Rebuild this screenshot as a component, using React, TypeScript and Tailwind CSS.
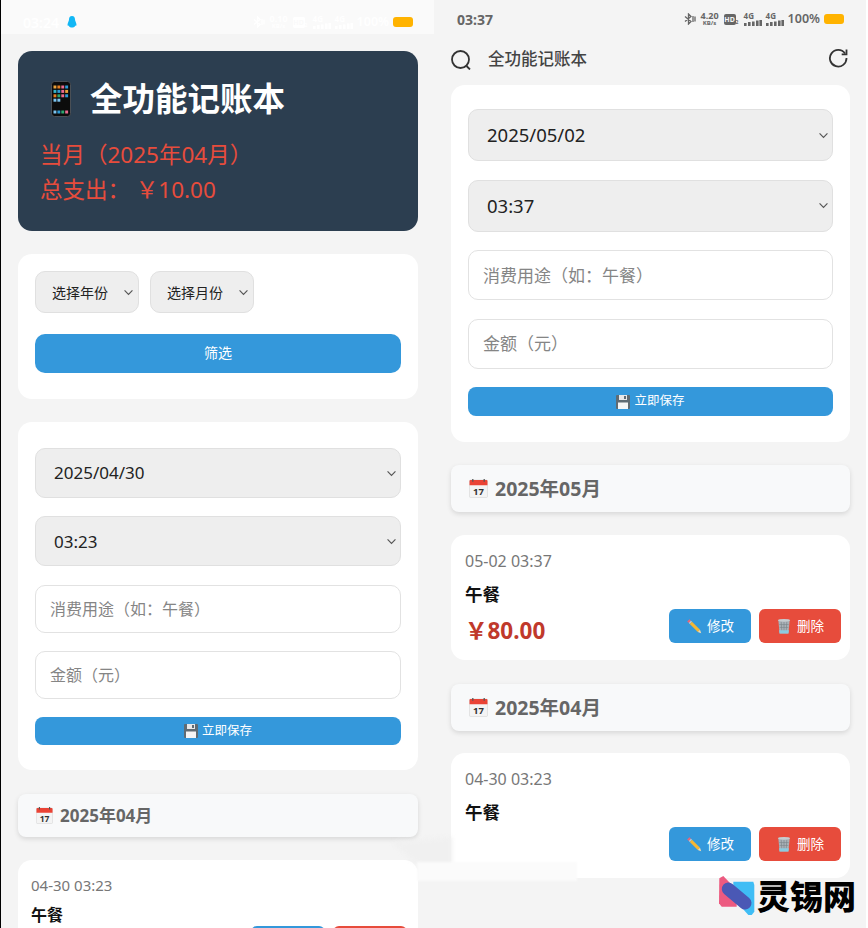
const FONT = "font-['Noto_Sans','Noto_Sans_CJK_SC',sans-serif]"

function Chevron({ className }: { className: string }) {
  return (
    <svg viewBox="0 0 12 8" className={className} fill="none" stroke="#555" strokeWidth="1.3">
      <path d="M1.5 1.5 6 6.2l4.5-4.7" />
    </svg>
  )
}

function PhoneEmoji() {
  const colors = ['#e9a23b', '#e67e22', '#ec6a8f', '#2e9bd6', '#34b3c9', '#2e9bd6', '#ec6a8f', '#e9a23b', '#e67e22', '#2ea66f', '#ec6a8f', '#2e9bd6', '#7cc4f0', '#7cc4f0']
  return (
    <svg viewBox="0 0 22 36" className="h-[36px] w-[22px] shrink-0">
      <rect x="1.5" y="0.5" width="19" height="35" rx="3" fill="#0c0c0c" stroke="#4a4f55" />
      {colors.map((c, i) => (
        <rect key={i} x={3.5 + (i % 4) * 3.9} y={4.5 + Math.floor(i / 4) * 4.4} width="2.9" height="3" fill={c} />
      ))}
      {['#7cc4f0', '#2e9bd6', '#2ea66f', '#ec6a8f'].map((c, i) => (
        <rect key={c} x={3.5 + i * 3.9} y="29.5" width="2.9" height="3" fill={c} />
      ))}
    </svg>
  )
}

function CalendarEmoji({ className }: { className: string }) {
  return (
    <svg viewBox="0 0 18 18" className={className}>
      <rect x="0.5" y="1" width="17" height="16.5" rx="1" fill="#f4f4f4" stroke="#cfcfcf" strokeWidth="0.5" />
      <path d="M0.5 2a1 1 0 0 1 1-1h15a1 1 0 0 1 1 1v4h-17z" fill="#ea4335" />
      <rect x="3" y="0" width="1.2" height="2.6" fill="#555" />
      <rect x="13.8" y="0" width="1.2" height="2.6" fill="#555" />
      <text x="9" y="15.4" textAnchor="middle" fontSize="9" fontWeight="700" fill="#333" fontFamily="Noto Sans">17</text>
    </svg>
  )
}

function FloppyEmoji() {
  return (
    <svg viewBox="0 0 14 14" className="h-[14px] w-[14px] shrink-0">
      <path d="M0 1a1 1 0 0 1 1-1h12a1 1 0 0 1 1 1v12a1 1 0 0 1-1 1H1a1 1 0 0 1-1-1z" fill="#5f6b73" />
      <rect x="3" y="0" width="8" height="5" fill="#e8e8e8" />
      <rect x="8" y="1" width="2" height="3" fill="#5f6b73" />
      <rect x="2" y="7.5" width="10" height="6.5" fill="#f5f5f5" />
    </svg>
  )
}

function PencilEmoji({ className }: { className: string }) {
  return (
    <svg viewBox="0 0 16 16" className={className}>
      <path d="M3.4 1.2 1.2 3.4l1.6 1.6L5 2.8z" fill="#e8667a" />
      <path d="M5 2.8 2.8 5l1 1L6 3.8z" fill="#c7ccd1" />
      <path d="M6 3.8 3.8 6l8 8 2.2-2.2z" fill="#f7b733" />
      <path d="m14 11.8-2.2 2.2 3.4 1.2z" fill="#f5dcb0" />
    </svg>
  )
}

function TrashEmoji({ className }: { className: string }) {
  return (
    <svg viewBox="0 0 16 17" className={className}>
      <path d="M2 2.5h12l-1.3 14H3.3z" fill="#aab2b8" />
      <path d="M2.8 13h10.4l-.5 3.5H3.3z" fill="#8ccbe0" />
      <path d="M5 4l.6 9M8 4v9M11 4l-.6 9M3 7h10M3.3 10h9.4" stroke="#7c858b" strokeWidth="0.7" />
      <ellipse cx="8" cy="2.5" rx="6.5" ry="1.5" fill="#c6ccd0" />
    </svg>
  )
}

function Signal() {
  return (
    <span className="flex w-[18px] flex-col items-start">
      <span className="text-[8px] font-bold leading-[8px]">4G</span>
      <svg viewBox="0 0 18 6" className="h-[6px] w-[18px]" fill="currentColor">
        <rect x="0" y="3" width="2.6" height="3" />
        <rect x="4" y="2" width="2.6" height="4" />
        <rect x="8" y="1.5" width="2.6" height="4.5" />
        <rect x="12" y="0.5" width="2.6" height="5.5" />
        <rect x="15.4" y="0" width="2.6" height="6" />
      </svg>
    </span>
  )
}

function StatusIcons({ speed, hdText }: { speed: string; hdText: string }) {
  return (
    <div className="flex items-center gap-[4px]">
      <svg viewBox="0 0 12 12" className="h-[12px] w-[12px]" fill="none" stroke="currentColor" strokeWidth="1.3">
        <path d="M1 3.5 7 8.5 4.5 11V1L7 3.5 1 8.5M9 3v6M11 3.5v5" />
      </svg>
      <span className="flex w-[20px] flex-col items-center font-bold">
        <span className="text-[9px] leading-[9px]">{speed}</span>
        <span className="text-[6px] leading-[7px]">KB/s</span>
      </span>
      <span className="flex w-[16px] items-end">
        <span className={`flex h-[11px] w-[12px] items-center justify-center rounded-[2px] bg-current`}>
          <span className={`text-[7px] font-bold leading-none ${hdText}`}>HD</span>
        </span>
        <span className="text-[5px] font-bold leading-[6px]">2</span>
      </span>
      <Signal />
      <Signal />
      <span className="text-[12.5px] font-semibold leading-none">100%</span>
      <span className="h-[10px] w-[20px] rounded-[3px] bg-[#ffb300]" />
    </div>
  )
}

function FakeSelect({ label, dense }: { label: string; dense: boolean }) {
  return (
    <div
      className={`flex items-center justify-between rounded-[10px] border border-[#e0e0e0] bg-[#eeeeee] pl-[18px] pr-[3px] text-[#222] ${
        dense ? 'h-[50px] text-[17px]' : 'h-[52px] text-[18.5px]'
      }`}
    >
      <span>{label}</span>
      <Chevron className="h-[7px] w-[11px]" />
    </div>
  )
}

function Field({ placeholder, dense }: { placeholder: string; dense: boolean }) {
  return (
    <input
      readOnly
      placeholder={placeholder}
      className={`w-full rounded-[10px] border border-[#e2e2e2] bg-white px-[14px] placeholder:text-[#858585] ${
        dense ? 'h-[48px] text-[16px]' : 'h-[50px] text-[17px]'
      }`}
    />
  )
}

function ExpenseForm({ date, time, dense }: { date: string; time: string; dense: boolean }) {
  return (
    <section className={`flex flex-col rounded-[14px] bg-white px-[17px] ${dense ? 'mb-px gap-[18.25px] pb-[25px] pt-[26px]' : 'gap-[18.5px] pb-[26px] pt-[24px]'}`}>
      <FakeSelect label={date} dense={dense} />
      <FakeSelect label={time} dense={dense} />
      <Field placeholder="消费用途（如：午餐）" dense={dense} />
      <Field placeholder="金额（元）" dense={dense} />
      <button className={`flex items-center justify-center gap-[4px] rounded-[8px] bg-[#3498db] text-[12.5px] text-white ${dense ? 'h-[28px]' : 'h-[29px]'}`}>
        <FloppyEmoji />
        立即保存
      </button>
    </section>
  )
}

function MonthHeader({ month, dense }: { month: string; dense: boolean }) {
  return (
    <div
      className={`flex items-center rounded-[8px] bg-[#f8f9fa] font-bold text-[#666] shadow-[0_2px_5px_rgba(0,0,0,0.12)] ${
        dense ? 'h-[43px] gap-[7px] pl-[18px] text-[17px]' : 'h-[47px] gap-[7px] pl-[18px] text-[19.5px]'
      }`}
    >
      <CalendarEmoji className={dense ? 'h-[17px] w-[17px]' : 'h-[19px] w-[19px]'} />
      {month}
    </div>
  )
}

function RecordCard({ time, title, amount, dense }: { time: string; title: string; amount?: string; dense: boolean }) {
  const btn = `flex items-center justify-center gap-[5px] rounded-[6px] text-white ${dense ? 'h-[34px] w-[74px] text-[13px]' : 'h-[34px] w-[82px] text-[13.5px]'}`
  return (
    <article className={`rounded-[14px] bg-white ${dense ? 'pl-[13px] pr-[11px]' : 'pl-[14px] pr-[9px]'} pb-[17px] pt-[15px]`}>
      <p className={`text-[#777] ${dense ? 'text-[15px] leading-[20px]' : 'text-[16px] leading-[22px]'}`}>{time}</p>
      <p className={`font-semibold text-[#111] ${dense ? 'mt-[9px] text-[16px] leading-[22px]' : 'mt-[11px] text-[17.5px] leading-[22px]'}`}>{title}</p>
      <div className={`flex items-center justify-between ${dense ? 'mt-0' : 'mt-[4px]'}`}>
        <span className="h-[34px] pt-[5px] text-[22.5px] font-bold leading-[34px] text-[#c0392b]">{amount}</span>
        <div className="flex gap-[8px]">
          <button className={`${btn} bg-[#3498db]`}>
            <PencilEmoji className="h-[16px] w-[16px]" />
            修改
          </button>
          <button className={`${btn} bg-[#e74c3c]`}>
            <TrashEmoji className="h-[16px] w-[16px]" />
            删除
          </button>
        </div>
      </div>
    </article>
  )
}

function LeftPhone() {
  return (
    <div className="flex h-[928px] w-[434px] shrink-0 flex-col overflow-hidden border-l border-black bg-[#f4f4f4]">
      <div className="flex h-[34px] shrink-0 items-center justify-between bg-[#fafafa] pl-[22px] pr-[21px] pt-[10px] text-white">
        <div className="flex items-center gap-[8px]">
          <span className="text-[14px] font-semibold">03:24</span>
          <svg viewBox="0 0 10 12" className="h-[12px] w-[10px]" fill="#12b7f5">
            <path d="M5 0C2.8 0 2 1.8 2 3.5 2 5 .5 7 .5 9c0 .8.6 1 1.2.5C2 11 3.5 11.500 5 11.500S8 11 8.300 9.500c.6.500 1.200.3 1.200-.5 0-2-1.500-4-1.500-5.500C8 1.800 7.200 0 5 0z" />
          </svg>
        </div>
        <StatusIcons speed="0.10" hdText="text-[#fafafa]" />
      </div>
      <div className="flex flex-col gap-[23px] pl-[17px] pr-[16px] pt-[17px]">
        <header className="flex h-[180px] flex-col rounded-[14px] bg-[#2c3e50] pl-[23px] pt-[28px]">
          <div className="flex items-center gap-[18px] pl-[9px]">
            <PhoneEmoji />
            <h1 className="text-[32.5px] font-bold leading-[40px] text-white">全功能记账本</h1>
          </div>
          <p className="-ml-px mt-[18px] text-[22.5px] leading-[35px] text-[#e74c3c]">当月（2025年04月）</p>
          <p className="-ml-px text-[22.5px] leading-[35px] text-[#e74c3c]">总支出： ￥10.00</p>
        </header>
        <section className="flex h-[145px] flex-col rounded-[14px] bg-white px-[17px] pt-[17px]">
          <div className="flex gap-[11px]">
            {['选择年份', '选择月份'].map((label) => (
              <div key={label} className="flex h-[42px] w-[104px] items-center justify-between rounded-[10px] border border-[#e0e0e0] bg-[#eeeeee] pl-[16px] pr-[4px] text-[14px] text-[#222]">
                <span>{label}</span>
                <Chevron className="h-[7px] w-[11px]" />
              </div>
            ))}
          </div>
          <button className="mt-[21px] h-[39px] rounded-[10px] bg-[#3498db] pb-[2px] text-[14px] text-white">筛选</button>
        </section>
        <ExpenseForm date="2025/04/30" time="03:23" dense />
        <MonthHeader month="2025年04月" dense />
        <RecordCard time="04-30 03:23" title="午餐" amount="￥10.00" dense />
      </div>
    </div>
  )
}

function RightPhone() {
  return (
    <div className="flex h-[928px] w-[434px] shrink-0 flex-col overflow-hidden border-r-2 border-white bg-[#f4f4f4]">
      <div className="flex h-[38px] shrink-0 items-center justify-between pl-[23px] pr-[22px] text-[#666]">
        <span className="text-[14px] font-bold">03:37</span>
        <StatusIcons speed="4.20" hdText="text-[#f4f4f4]" />
      </div>
      <nav className="flex h-[47px] shrink-0 items-start justify-between pl-[17px] pr-[18px] pt-[10px] text-[#333]">
        <div className="flex items-center gap-[17px]">
          <svg viewBox="0 0 20 20" className="h-[20px] w-[20px]" fill="none" stroke="currentColor" strokeWidth="1.8">
            <circle cx="9.5" cy="9.5" r="8.5" />
            <path d="m15.5 16 3.5 3.5" />
          </svg>
          <span className="-translate-y-px text-[16.5px] font-medium text-[#444]">全功能记账本</span>
        </div>
        <svg viewBox="0 0 20 20" className="h-[20px] w-[20px]" fill="none" stroke="currentColor" strokeWidth="1.8">
          <path d="M17 5.5A8.3 8.3 0 1 0 18.5 10" />
          <path d="M18.5 1.5v4.8h-4.8" />
        </svg>
      </nav>
      <div className="flex flex-col gap-[23px] pl-[17px] pr-[16px]">
        <ExpenseForm date="2025/05/02" time="03:37" dense={false} />
        <MonthHeader month="2025年05月" dense={false} />
        <div className="pb-px">
          <RecordCard time="05-02 03:37" title="午餐" amount="￥80.00" dense={false} />
        </div>
        <div className="-mb-px">
          <MonthHeader month="2025年04月" dense={false} />
        </div>
        <RecordCard time="04-30 03:23" title="午餐" dense={false} />
      </div>
    </div>
  )
}

export default function App() {
  return (
    <div className={`relative flex h-[928px] w-[868px] overflow-hidden bg-[#f4f4f4] ${FONT}`}>
      <LeftPhone />
      <RightPhone />
      {/* smeared patch where the two screenshots were retouched */}
      <svg viewBox="0 0 60 28" className="absolute left-[392px] top-[837px] h-[28px] w-[60px] blur-[2px]">
        <path d="M0 5 60 0v28H26z" fill="#f0f0f0" />
      </svg>
      <div className="absolute left-[417px] top-[862px] h-[19px] w-[160px] bg-[#fbfbfb] blur-[1px]" />
      {/* watermark */}
      <div className="absolute left-[718px] top-[876px] flex items-center gap-[2px]">
        <svg viewBox="0 0 37 40" className="h-[40px] w-[37px]">
          <path d="M1.3 2.3 5.300 0 18.700 14v16.700h-15L1 27.300z" fill="#ec5a80" />
          <path d="M15.300 5.700h20l1 3.300v26.700L33.700 39h-3.400L15.300 22z" fill="#3fbdf5" />
          <path d="M10.300 13 27 27" stroke="#4a58b5" strokeWidth="13" strokeLinecap="round" />
        </svg>
        <span className="text-[33px] font-black leading-none text-black">灵锡网</span>
      </div>
    </div>
  )
}
